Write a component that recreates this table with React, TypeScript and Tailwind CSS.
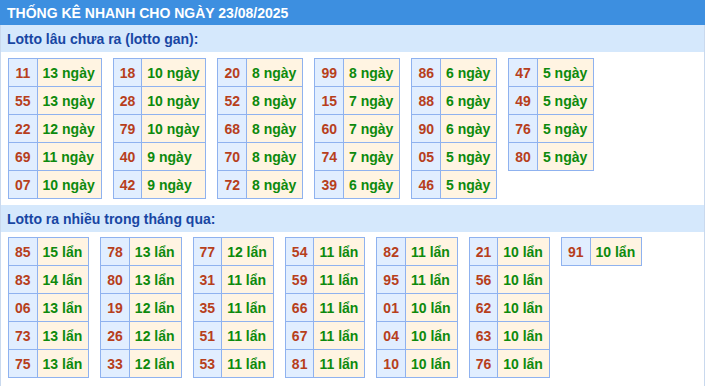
import React from 'react';

type Row = [string, number];

const ganTables: Row[][] = [
  [['11', 13], ['55', 13], ['22', 12], ['69', 11], ['07', 10]],
  [['18', 10], ['28', 10], ['79', 10], ['40', 9], ['42', 9]],
  [['20', 8], ['52', 8], ['68', 8], ['70', 8], ['72', 8]],
  [['99', 8], ['15', 7], ['60', 7], ['74', 7], ['39', 6]],
  [['86', 6], ['88', 6], ['90', 6], ['05', 5], ['46', 5]],
  [['47', 5], ['49', 5], ['76', 5], ['80', 5]],
];

const hotTables: Row[][] = [
  [['85', 15], ['83', 14], ['06', 13], ['73', 13], ['75', 13]],
  [['78', 13], ['80', 13], ['19', 12], ['26', 12], ['33', 12]],
  [['77', 12], ['31', 11], ['35', 11], ['51', 11], ['53', 11]],
  [['54', 11], ['59', 11], ['66', 11], ['67', 11], ['81', 11]],
  [['82', 11], ['95', 11], ['01', 10], ['04', 10], ['10', 10]],
  [['21', 10], ['56', 10], ['62', 10], ['63', 10], ['76', 10]],
  [['91', 10]],
];

const StatTable = ({ rows, unit }: { rows: Row[]; unit: string }) => (
  <div className="grid grid-cols-[auto_auto] gap-px bg-[#8fb2ef] border border-[#8fb2ef] self-start">
    {rows.map(([num, count]) => (
      <React.Fragment key={num}>
        <div className="h-[27px] flex items-center justify-center px-[6px] bg-[#e1eeff] text-[#b73f1c]">
          {num}
        </div>
        <div className="h-[27px] flex items-center pl-[5px] pr-[6px] bg-[#fff4e2] text-[#0d8a0d]">
          {count} {unit}
        </div>
      </React.Fragment>
    ))}
  </div>
);

const SectionTitle = ({ children }: { children: React.ReactNode }) => (
  <div className="h-[27px] flex items-center pl-[6px] bg-[#d5e8fc] text-[#1846a3]">{children}</div>
);

export default function App() {
  return (
    <div className="w-[705px] font-['Liberation_Sans',Arial,sans-serif] text-[14px] font-bold leading-4 bg-white">
      <div className="h-[25px] flex items-center pl-[7px] bg-[#3d8fe0] text-white">
        THỐNG KÊ NHANH CHO NGÀY 23/08/2025
      </div>
      <div className="border-x border-[#c9d9ee] pb-[8px]">
        <SectionTitle>Lotto lâu chưa ra (lotto gan):</SectionTitle>
        <div className="flex gap-[11px] pl-[7px] mt-[6px]">
          {ganTables.map((rows, i) => (
            <StatTable key={i} rows={rows} unit="ngày" />
          ))}
        </div>
        <div className="mt-[6px]">
          <SectionTitle>Lotto ra nhiều trong tháng qua:</SectionTitle>
        </div>
        <div className="flex gap-[11px] pl-[7px] mt-[5px]">
          {hotTables.map((rows, i) => (
            <StatTable key={i} rows={rows} unit="lẩn" />
          ))}
        </div>
      </div>
    </div>
  );
}
